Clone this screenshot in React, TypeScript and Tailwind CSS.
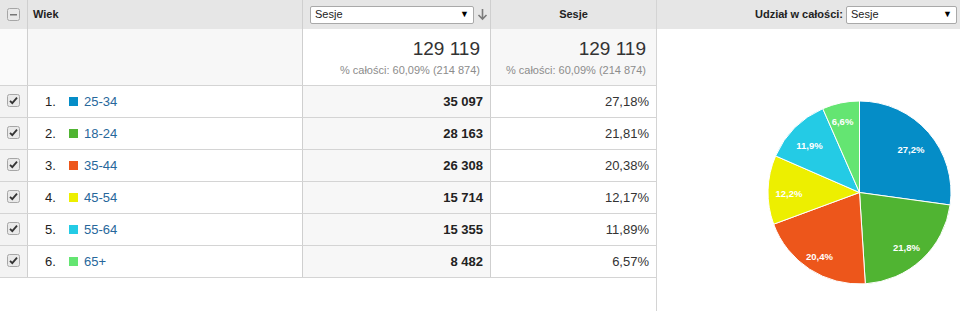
import React from 'react';

type Row = { label: string; color: string; sessions: string; pct: string };

const rows: Row[] = [
  { label: '25-34', color: '#058dc7', sessions: '35 097', pct: '27,18%' },
  { label: '18-24', color: '#50b432', sessions: '28 163', pct: '21,81%' },
  { label: '35-44', color: '#ed561b', sessions: '26 308', pct: '20,38%' },
  { label: '45-54', color: '#edef00', sessions: '15 714', pct: '12,17%' },
  { label: '55-64', color: '#24cbe5', sessions: '15 355', pct: '11,89%' },
  { label: '65+', color: '#64e572', sessions: '8 482', pct: '6,57%' },
];

const slices = [
  { value: 27.18, color: '#058dc7', text: '27,2%', x: 154, y: 59 },
  { value: 21.81, color: '#50b432', text: '21,8%', x: 149.5, y: 157.5 },
  { value: 20.38, color: '#ed561b', text: '20,4%', x: 62.5, y: 166 },
  { value: 12.17, color: '#edef00', text: '12,2%', x: 32, y: 103 },
  { value: 11.89, color: '#24cbe5', text: '11,9%', x: 52.5, y: 55.5 },
  { value: 6.57, color: '#64e572', text: '6,6%', x: 85.5, y: 31 },
];

function CheckBox({ dash = false }: { dash?: boolean }) {
  return (
    <svg width="13" height="13" viewBox="0 0 13 13">
      <rect x="0.5" y="0.5" width="12" height="12" rx="2" fill="#e9e9e9" stroke="#a6a6a6" />
      {dash ? (
        <rect x="3" y="6" width="7" height="1.5" fill="#777" />
      ) : (
        <path d="M3 6.8 L5.3 9.2 L10 3.6" fill="none" stroke="#333" strokeWidth="1.8" />
      )}
    </svg>
  );
}

function Select({ width }: { width: string }) {
  return (
    <div
      className={`${width} h-[18px] bg-white border border-[#a9a9a9] rounded-[2px] flex items-center justify-between px-[4px] text-[11px] text-[#222]`}>
      <span>Sesje</span>
      <span className="text-[9px] text-black">▼</span>
    </div>
  );
}

function Pie() {
  const cx = 102.5;
  const cy = 102.5;
  const r = 91.5;
  let acc = 0;
  return (
    <svg width="200" height="200" viewBox="0 0 200 200">
      {slices.map((s) => {
        const a0 = (acc / 100) * Math.PI * 2;
        acc += s.value;
        const a1 = (acc / 100) * Math.PI * 2;
        const x0 = cx + r * Math.sin(a0);
        const y0 = cy - r * Math.cos(a0);
        const x1 = cx + r * Math.sin(a1);
        const y1 = cy - r * Math.cos(a1);
        const large = a1 - a0 > Math.PI ? 1 : 0;
        return (
          <path
            key={s.text}
            d={`M${cx} ${cy} L${x0} ${y0} A${r} ${r} 0 ${large} 1 ${x1} ${y1} Z`}
            fill={s.color}
            stroke="#fff"
            strokeWidth="1"
          />
        );
      })}
      {slices.map((s) => (
        <text
          key={s.text + 'l'}
          x={s.x}
          y={s.y + 3.5}
          textAnchor="middle"
          fontSize="9.5"
          fontWeight="bold"
          fill="#fff"
          style={{ fontFamily: '"Liberation Sans", Arial, sans-serif' }}>
          {s.text}
        </text>
      ))}
    </svg>
  );
}

export default function App() {
  return (
    <div
      className="w-[960px] h-[311px] bg-white flex text-[#333] overflow-hidden"
      style={{ fontFamily: '"Liberation Sans", Arial, sans-serif' }}>
      {/* table */}
      <div className="w-[657px] border-r border-[#d4d4d4] flex flex-col">
        {/* header */}
        <div className="h-[29px] flex bg-[#e6e6e6]">
          <div className="w-[28px] border-r border-[#cfcfcf] flex items-center justify-center">
            <CheckBox dash />
          </div>
          <div className="w-[275px] border-r border-[#cfcfcf] flex items-center pl-[5px] text-[11px] font-bold text-[#222]">
            Wiek
          </div>
          <div className="w-[188px] border-r border-[#cfcfcf] flex items-center pl-[7px]">
            <Select width="w-[164px]" />
            <svg className="ml-[3px]" width="11" height="13" viewBox="0 0 11 13">
              <path d="M5.5 1 V11 M1.5 7 L5.5 11 L9.5 7" fill="none" stroke="#7a7a7a" strokeWidth="1.6" />
            </svg>
          </div>
          <div className="flex-1 flex items-center justify-center text-[11px] font-bold text-[#222]">
            Sesje
          </div>
        </div>
        {/* summary */}
        <div className="h-[56px] flex">
          <div className="w-[28px] border-r border-[#cfcfcf] bg-[#fafafa]" />
          <div className="w-[275px] border-r border-[#cfcfcf] bg-[#f7f7f7]" />
          <div className="w-[188px] border-r border-[#cfcfcf] bg-white flex flex-col items-end justify-center pr-[10px] pt-[1px]">
            <div className="text-[19px] leading-[22px] text-[#333]">129 119</div>
            <div className="text-[11px] leading-[14px] text-[#8c8c8c] mt-[3px]">% całości: 60,09% (214 874)</div>
          </div>
          <div className="flex-1 bg-[#f7f7f7] flex flex-col items-end justify-center pr-[10px] pt-[1px]">
            <div className="text-[19px] leading-[22px] text-[#333]">129 119</div>
            <div className="text-[11px] leading-[14px] text-[#8c8c8c] mt-[3px]">% całości: 60,09% (214 874)</div>
          </div>
        </div>
        {/* rows */}
        {rows.map((row, i) => (
          <div key={row.label} className="h-[32px] flex border-t border-[#d4d4d4]">
            <div className="w-[28px] border-r border-[#cfcfcf] bg-[#f3f3f3] flex items-center justify-center pb-[3px]">
              <CheckBox />
            </div>
            <div className="w-[275px] border-r border-[#cfcfcf] flex items-center text-[13px]">
              <span className="ml-[17px] w-[24px] text-[#222]">{i + 1}.</span>
              <span className="w-[9px] h-[9px] mr-[6px]" style={{ backgroundColor: row.color }} />
              <span className="text-[#27679b]">{row.label}</span>
            </div>
            <div className="w-[188px] border-r border-[#cfcfcf] bg-[#f7f7f7] flex items-center justify-end pr-[7px] text-[13px] font-bold text-[#222]">
              {row.sessions}
            </div>
            <div className="flex-1 flex items-center justify-end pr-[7px] text-[13px] text-[#333]">
              {row.pct}
            </div>
          </div>
        ))}
        <div className="border-t border-[#d4d4d4]" />
      </div>
      {/* chart panel */}
      <div className="flex-1 flex flex-col">
        <div className="h-[29px] bg-[#e6e6e6] flex items-center justify-end pr-[3px]">
          <span className="text-[11px] font-bold text-[#222] mr-[3px]">Udział w całości:</span>
          <Select width="w-[111px]" />
        </div>
        <div className="pl-[100px] pt-[61px]">
          <Pie />
        </div>
      </div>
    </div>
  );
}
